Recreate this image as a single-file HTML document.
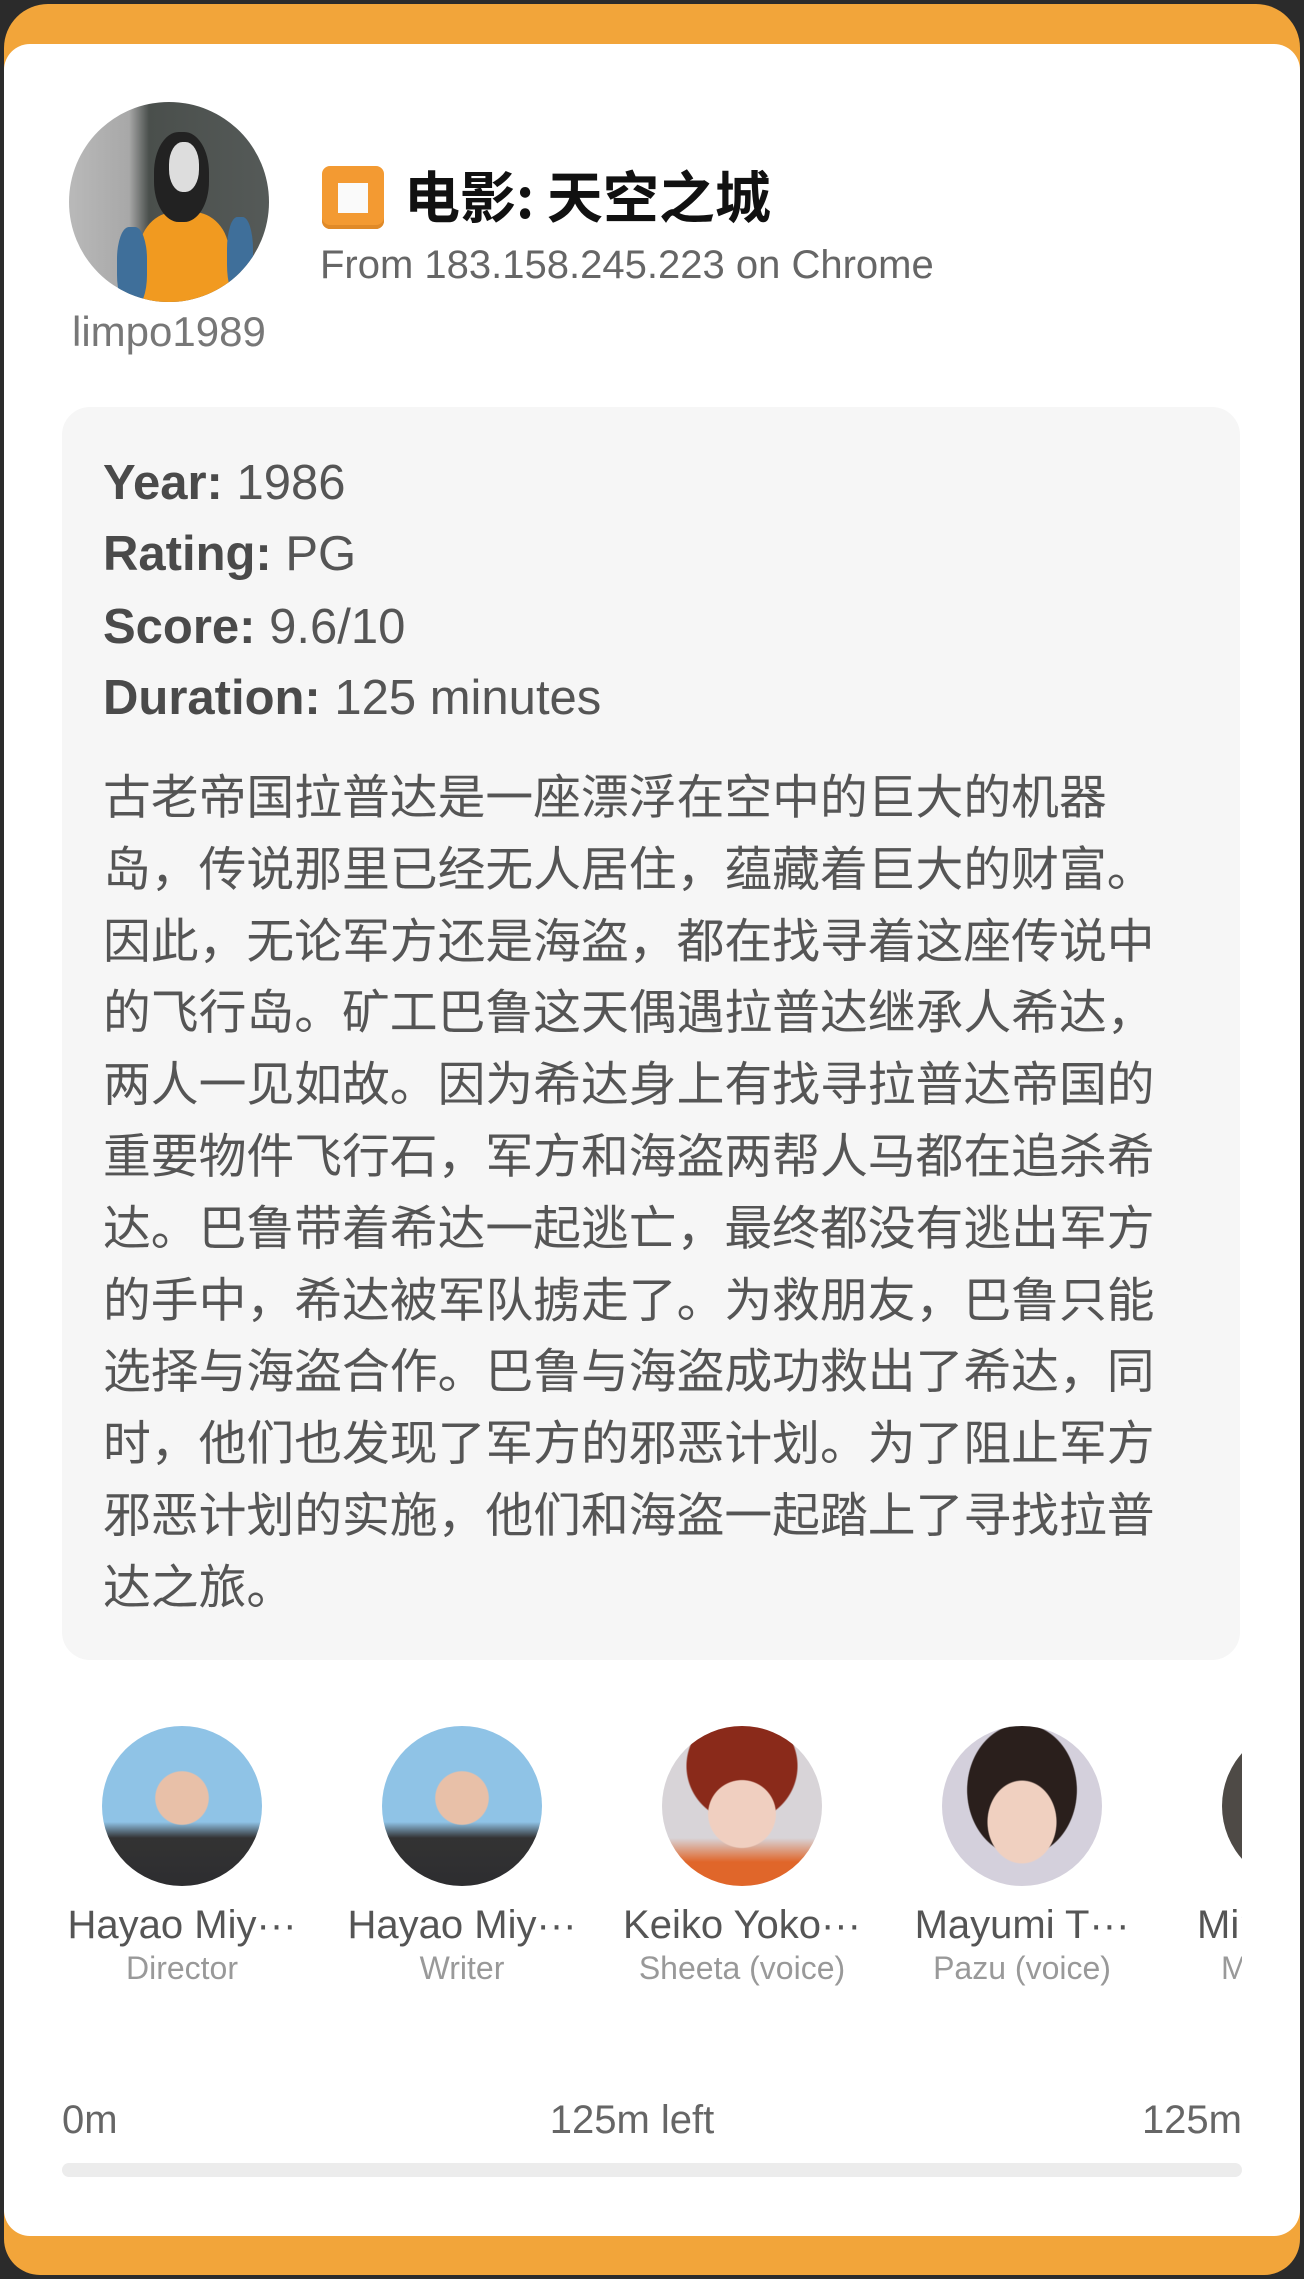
<!DOCTYPE html>
<html><head><meta charset="utf-8"><style>
*{margin:0;padding:0;box-sizing:border-box}
body{width:1304px;height:2279px;background:#2b2b2b;overflow:hidden;font-family:"Liberation Sans","Noto Sans CJK SC",sans-serif;position:relative}
.outer{position:absolute;left:4px;top:4px;width:1296px;height:2271px;background:#f2a53a;border-radius:44px 44px 36px 36px}
.card{position:absolute;left:4px;top:44px;width:1296px;height:2192px;background:#fff;border-radius:26px}
.abs{position:absolute}
.av{position:absolute;border-radius:50%;overflow:hidden}
.info{position:absolute;left:62px;top:407px;width:1178px;height:1253px;background:#f6f6f6;border-radius:28px}
.kv{position:absolute;left:41px;font-size:49px;color:#555;line-height:60px}
.kv b{color:#4a4a4a}
.p{position:absolute;left:41px;font-size:47.8px;line-height:71.8px;color:#555;font-family:"Noto Sans CJK SC",sans-serif;white-space:nowrap}
.clip{position:absolute;left:62px;top:1700px;width:1180px;height:300px;overflow:hidden}
.cast{position:absolute;width:250px;text-align:center}
.cast .n{font-size:40px;color:#555;white-space:nowrap;margin-top:16px;line-height:46px}
.cast .r{font-size:32px;color:#999;white-space:nowrap;line-height:40px}
</style></head><body>
<div class="outer"></div>
<div class="card"></div>

<div class="av" style="left:69px;top:102px;width:200px;height:200px;background:linear-gradient(90deg,#b9b9b9 0%,#a8a8a8 30%,#4a4f4c 40%,#555a58 100%)">
  <div class="abs" style="left:70px;top:110px;width:90px;height:100px;background:#f19a20;border-radius:40% 40% 0 0"></div>
  <div class="abs" style="left:48px;top:125px;width:30px;height:80px;background:#3f6f9a;border-radius:40%"></div>
  <div class="abs" style="left:158px;top:115px;width:26px;height:80px;background:#3f6f9a;border-radius:40%"></div>
  <div class="abs" style="left:85px;top:30px;width:55px;height:90px;background:#222;border-radius:45%"></div>
  <div class="abs" style="left:100px;top:40px;width:30px;height:50px;background:#ddd;border-radius:45%"></div>
</div>
<div class="abs" style="left:72px;top:308px;font-size:42px;color:#777">limpo1989</div>

<div class="abs" style="left:322px;top:166px;width:62px;height:63px;background:#f39a32;border-radius:8px;box-shadow:inset 0 -4px 0 #e08a28"></div>
<div class="abs" style="left:338px;top:183px;width:30px;height:30px;background:#fafafa"></div>
<div class="abs" style="left:404px;top:160px;font-size:56px;font-weight:bold;color:#111;line-height:70px;font-family:'Noto Sans CJK SC',sans-serif">电影: 天空之城</div>
<div class="abs" style="left:320px;top:240px;font-size:40px;color:#666;line-height:50px">From 183.158.245.223 on Chrome</div>

<div class="info">
  <div class="kv" style="top:46px"><b>Year:</b> 1986</div>
  <div class="kv" style="top:117px"><b>Rating:</b> PG</div>
  <div class="kv" style="top:190px"><b>Score:</b> 9.6/10</div>
  <div class="kv" style="top:261px"><b>Duration:</b> 125 minutes</div>
  <div class="p" style="top:351px">古老帝国拉普达是一座漂浮在空中的巨大的机器<br>岛，传说那里已经无人居住，蕴藏着巨大的财富。<br>因此，无论军方还是海盗，都在找寻着这座传说中<br>的飞行岛。矿工巴鲁这天偶遇拉普达继承人希达，<br>两人一见如故。因为希达身上有找寻拉普达帝国的<br>重要物件飞行石，军方和海盗两帮人马都在追杀希<br>达。巴鲁带着希达一起逃亡，最终都没有逃出军方<br>的手中，希达被军队掳走了。为救朋友，巴鲁只能<br>选择与海盗合作。巴鲁与海盗成功救出了希达，同<br>时，他们也发现了军方的邪恶计划。为了阻止军方<br>邪恶计划的实施，他们和海盗一起踏上了寻找拉普<br>达之旅。</div>
</div>

<div class="clip">
  <div class="cast" style="left:-5px;top:26px">
    <div style="width:160px;height:160px;margin:0 auto;border-radius:50%;background:radial-gradient(circle at 50% 45%,#e8c0a8 0 22%,transparent 23%),linear-gradient(180deg,#8fc3e6 0,#8fc3e6 60%,#333 70%,#2d2d30 100%)"></div>
    <div class="n">Hayao Miy···</div><div class="r">Director</div></div>
  <div class="cast" style="left:275px;top:26px">
    <div style="width:160px;height:160px;margin:0 auto;border-radius:50%;background:radial-gradient(circle at 50% 45%,#e8c0a8 0 22%,transparent 23%),linear-gradient(180deg,#8fc3e6 0,#8fc3e6 60%,#333 70%,#2d2d30 100%)"></div>
    <div class="n">Hayao Miy···</div><div class="r">Writer</div></div>
  <div class="cast" style="left:555px;top:26px">
    <div style="width:160px;height:160px;margin:0 auto;border-radius:50%;background:radial-gradient(circle at 50% 55%,#f0cfc0 0 28%,transparent 29%),radial-gradient(circle at 50% 25%,#8a2a1a 0 38%,transparent 39%),linear-gradient(180deg,#d8d4d8 0,#d8d4d8 70%,#e0662a 85%)"></div>
    <div class="n">Keiko Yoko···</div><div class="r">Sheeta (voice)</div></div>
  <div class="cast" style="left:835px;top:26px">
    <div style="width:160px;height:160px;margin:0 auto;border-radius:50%;background:radial-gradient(ellipse at 50% 60%,#f0d0c0 0 30%,transparent 31%),radial-gradient(ellipse at 50% 40%,#2a1f1c 0 48%,transparent 49%),#d4d0dc"></div>
    <div class="n">Mayumi T···</div><div class="r">Pazu (voice)</div></div>
  <div class="cast" style="left:1115px;top:26px">
    <div style="width:160px;height:160px;margin:0 auto;border-radius:50%;background:#4e4a46"></div>
    <div class="n" style="text-align:left;padding-left:20px">Min</div><div class="r" style="text-align:left;padding-left:44px">Mu</div></div>
</div>

<div class="abs" style="left:62px;top:2098px;font-size:40px;color:#666">0m</div>
<div class="abs" style="left:0;width:1264px;top:2098px;font-size:40px;color:#666;text-align:center">125m left</div>
<div class="abs" style="right:62px;top:2098px;font-size:40px;color:#666">125m</div>
<div class="abs" style="left:62px;top:2163px;width:1180px;height:14px;background:#ececec;border-radius:7px"></div>
</body></html>
